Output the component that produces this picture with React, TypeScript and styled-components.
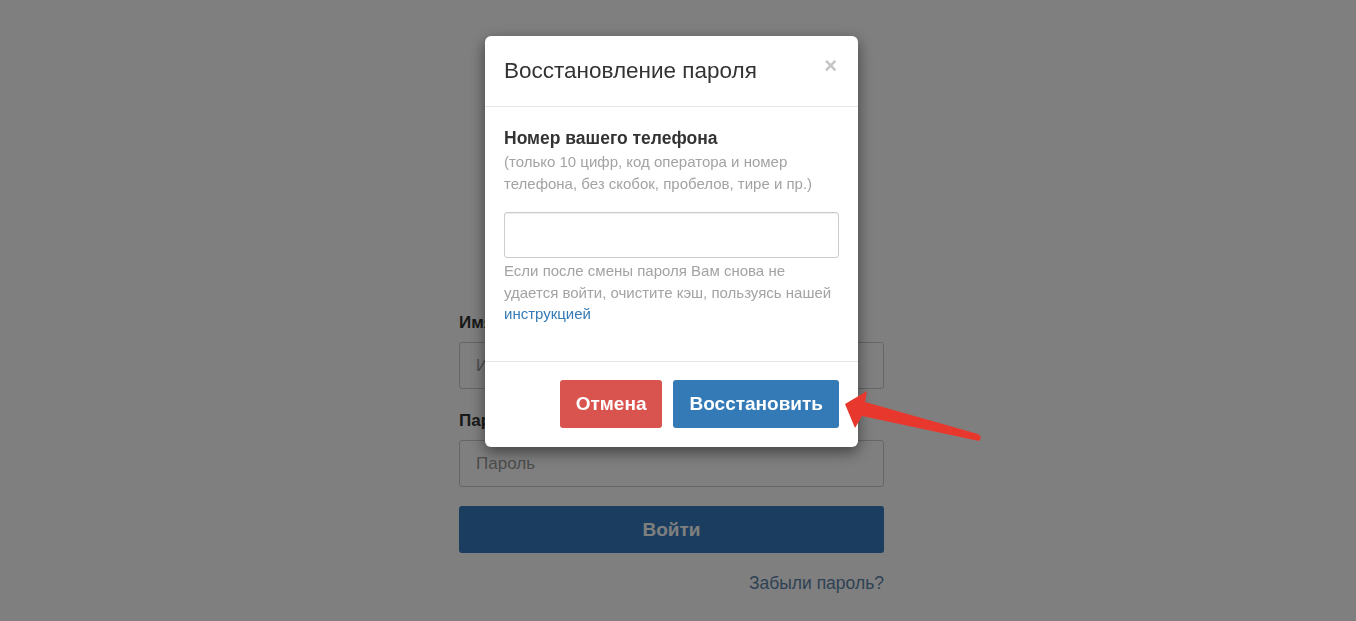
import styled, { createGlobalStyle } from "styled-components";

const GlobalStyle = createGlobalStyle`
  body {
    margin: 0;
    background: #ffffff;
    font-family: "Liberation Sans", Arial, sans-serif;
    color: #333;
  }
`;

const Page = styled.div`
  min-height: 100vh;
  padding-right: 13px;
  box-sizing: border-box;
`;

const LoginForm = styled.form`
  width: 425px;
  margin: 0 auto;
  padding-top: 312px;
  display: flex;
  flex-direction: column;
`;

const FieldLabel = styled.label`
  font-size: 17px;
  line-height: 22px;
  font-weight: bold;
  color: #333;
  margin-bottom: 8px;
`;

const FieldInput = styled.input<{ $last?: boolean }>`
  box-sizing: border-box;
  height: 47px;
  padding: 0 16px;
  border: 1px solid #ccc;
  border-radius: 3px;
  font-family: inherit;
  font-size: 17px;
  color: #555;
  margin-bottom: ${(p) => (p.$last ? "19px" : "21px")};
  &::placeholder {
    color: #999;
  }
`;

const SubmitButton = styled.button`
  height: 47px;
  border: none;
  border-radius: 3px;
  background: #367cc0;
  color: #ffffff;
  font-family: inherit;
  font-size: 19px;
  font-weight: bold;
`;

const ForgotLink = styled.a`
  align-self: flex-end;
  margin-top: 19px;
  font-size: 17.5px;
  line-height: 22px;
  color: #5d83a8;
  text-decoration: none;
`;

const Overlay = styled.div`
  position: fixed;
  inset: 0;
  background: rgba(0, 0, 0, 0.5);
  display: flex;
  justify-content: center;
  align-items: flex-start;
  padding: 36px 13px 0 0;
`;

const Modal = styled.div`
  width: 373px;
  background: #fff;
  border-radius: 6px;
  box-shadow: 0 5px 15px rgba(0, 0, 0, 0.5);
`;

const ModalHeader = styled.div`
  display: flex;
  justify-content: space-between;
  align-items: flex-start;
  padding: 19px 21px 19px 19px;
  border-bottom: 1px solid #e5e5e5;
`;

const ModalTitle = styled.h4`
  margin: 0;
  font-size: 22.5px;
  line-height: 32px;
  font-weight: normal;
  color: #333;
`;

const CloseButton = styled.button`
  border: none;
  background: none;
  padding: 0;
  margin-top: 0;
  font-family: inherit;
  font-size: 22px;
  line-height: 22px;
  font-weight: bold;
  color: #c4c4c4;
`;

const ModalBody = styled.div`
  padding: 20px 19px 36px 19px;
  border-bottom: 1px solid #e5e5e5;
`;

const BodyLabel = styled.div`
  font-size: 17.5px;
  line-height: 22px;
  font-weight: bold;
  color: #333;
`;

const Hint = styled.div`
  margin-top: 2px;
  font-size: 15px;
  line-height: 22px;
  color: #a3a3a3;
`;

const PhoneInput = styled.input`
  display: block;
  box-sizing: border-box;
  width: 100%;
  height: 46px;
  margin-top: 17px;
  border: 1px solid #ccc;
  border-radius: 3px;
  box-shadow: inset 0 1px 1px rgba(0, 0, 0, 0.075);
`;

const HelpText = styled.div`
  margin-top: 2px;
  font-size: 15px;
  line-height: 21.5px;
  color: #a3a3a3;
`;

const HelpLink = styled.a`
  color: #337ab7;
  text-decoration: none;
`;

const ModalFooter = styled.div`
  display: flex;
  justify-content: flex-end;
  gap: 11px;
  padding: 18px 19px 19px 19px;
`;

const ActionButton = styled.button<{ $variant: "danger" | "primary" }>`
  height: 48px;
  padding: 0 16px;
  border: none;
  border-radius: 3px;
  background: ${(p) => (p.$variant === "danger" ? "#d9534f" : "#337ab7")};
  color: #fff;
  font-family: inherit;
  font-size: 19px;
  font-weight: bold;
`;

const Annotation = styled.svg`
  position: fixed;
  inset: 0;
  pointer-events: none;
`;

export default function App() {
  return (
    <>
      <GlobalStyle />
      <Page>
        <LoginForm>
          <FieldLabel>Имя пользователя</FieldLabel>
          <FieldInput placeholder="Имя пользователя" />
          <FieldLabel>Пароль</FieldLabel>
          <FieldInput $last placeholder="Пароль" />
          <SubmitButton type="button">Войти</SubmitButton>
          <ForgotLink>Забыли пароль?</ForgotLink>
        </LoginForm>
      </Page>
      <Overlay>
        <Modal>
          <ModalHeader>
            <ModalTitle>Восстановление пароля</ModalTitle>
            <CloseButton>×</CloseButton>
          </ModalHeader>
          <ModalBody>
            <BodyLabel>Номер вашего телефона</BodyLabel>
            <Hint>
              (только 10 цифр, код оператора и номер телефона, без скобок,
              пробелов, тире и пр.)
            </Hint>
            <PhoneInput />
            <HelpText>
              Если после смены пароля Вам снова не удается войти, очистите
              кэш, пользуясь нашей <HelpLink>инструкцией</HelpLink>
            </HelpText>
          </ModalBody>
          <ModalFooter>
            <ActionButton $variant="danger">Отмена</ActionButton>
            <ActionButton $variant="primary">Восстановить</ActionButton>
          </ModalFooter>
        </Modal>
      </Overlay>
      <Annotation width="1356" height="621" viewBox="0 0 1356 621">
        <path
          d="M845 404 L867 391 L865 402 L978 434 Q983 437 979 441 L862 416 L855 428 Z"
          fill="#e8382e"
        />
      </Annotation>
    </>
  );
}
